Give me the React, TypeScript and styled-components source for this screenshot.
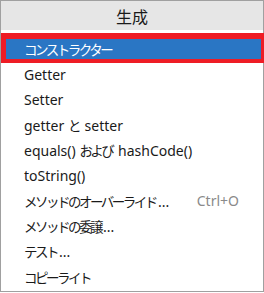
import React from "react";
import styled, { createGlobalStyle } from "styled-components";

const Global = createGlobalStyle`
  html, body { margin: 0; padding: 0; background: #ffffff; }
  body { font-family: "Noto Sans", "Noto Sans CJK JP", sans-serif; }
`;

const Panel = styled.div`
  width: 264px;
  height: 292px;
  box-sizing: border-box;
  border: 1px solid #a0a0a0;
  background: #ffffff;
  display: flex;
  flex-direction: column;
`;

const Header = styled.div`
  height: 29px;
  background: #e6e6e6;
  display: flex;
  align-items: center;
  justify-content: center;
  font-family: "Noto Sans CJK JP", sans-serif;
  font-size: 16px;
  color: #1a1a1a;
  margin-bottom: 3px;
`;

const List = styled.div`
  display: flex;
  flex-direction: column;
`;

const Selected = styled.div`
  height: 30px;
  box-sizing: border-box;
  margin-right: -1px;
  border-style: solid;
  border-color: #ee1c25;
  border-width: 6px 3px 4px 5px;
  background: #2a76c4;
  color: #ffffff;
  display: flex;
  align-items: center;
  padding-left: 18px;
  padding-bottom: 1px;
  font-size: 14px;
`;

const Item = styled.div`
  height: 25.25px;
  box-sizing: border-box;
  display: flex;
  align-items: center;
  padding: 0 24px 2px 23px;
  font-size: 14px;
  color: #1a1a1a;
`;

const Label = styled.span`
  flex: 1;
  white-space: nowrap;
`;

const Ja = styled.span`
  font-family: "Noto Sans CJK JP", sans-serif;
  font-size: 13.5px;
  letter-spacing: -2.5px;
  padding-right: 2px;
`;

const Shortcut = styled.span`
  color: #8a8a8a;
`;

function Text({ value }: { value: string }) {
  const parts = value.split(/([\u3000-\u30ff\u4e00-\u9fff\uff00-\uffef]+)/);
  return (
    <>
      {parts.map((p, i) =>
        i % 2 === 1 ? <Ja key={i}>{p}</Ja> : p ? <React.Fragment key={i}>{p}</React.Fragment> : null
      )}
    </>
  );
}

const items: { label: string; shortcut?: string }[] = [
  { label: "Getter" },
  { label: "Setter" },
  { label: "getter と setter" },
  { label: "equals() および hashCode()" },
  { label: "toString()" },
  { label: "メソッドのオーバーライド...", shortcut: "Ctrl+O" },
  { label: "メソッドの委譲..." },
  { label: "テスト..." },
  { label: "コピーライト" },
];

export default function App() {
  return (
    <>
      <Global />
      <Panel>
        <Header>生成</Header>
        <List>
          <Selected>
            <Text value="コンストラクター" />
          </Selected>
          {items.map((it) => (
            <Item key={it.label}>
              <Label>
                <Text value={it.label} />
              </Label>
              {it.shortcut && <Shortcut>{it.shortcut}</Shortcut>}
            </Item>
          ))}
        </List>
      </Panel>
    </>
  );
}
